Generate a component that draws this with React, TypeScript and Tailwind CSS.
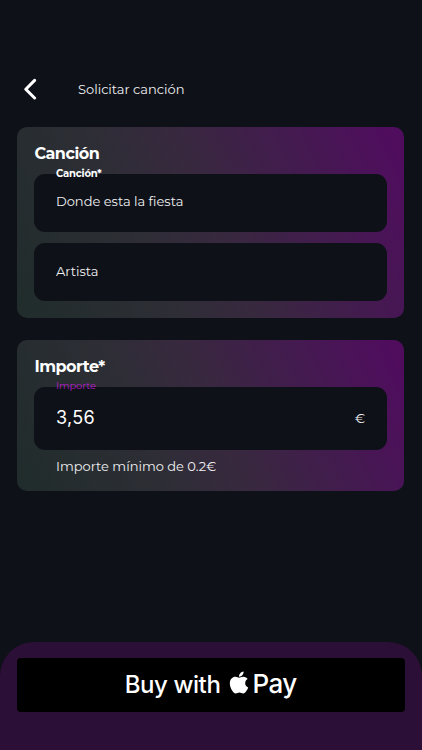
import { useState, type ReactNode } from "react";
import { FaApple } from "react-icons/fa";

type CardProps = {
  title: string;
  className: string;
  children: ReactNode;
}

const Card = ({ title, className, children }: CardProps) => (
  <section
    className={`mx-[17px] mr-[18px] rounded-[10px] bg-[linear-gradient(65deg,#202c2b_0%,#2d2e35_32%,#38283f_52%,#431b4f_74%,#500d5e_96%)] pr-[17.5px] pl-[17.4px] pt-[17.5px] ${className}`}
  >
    <h2 className="text-[16px] leading-[18px] font-bold tracking-[-0.48px] whitespace-nowrap text-white">{title}</h2>
    {children}
  </section>
);

export default function App() {
  const [song, setSong] = useState("Donde esta la fiesta");
  const [artist, setArtist] = useState("");
  const [amount, setAmount] = useState("3,56");

  return (
    <main className="flex h-[750px] w-full flex-col overflow-hidden bg-[#0e1118] font-['Montserrat','Inter',sans-serif] text-[#f0f0f2]">
      <header className="flex h-[22px] mt-[78px] items-center pl-[22px]">
        <button type="button" aria-label="Volver" className="w-[56px] text-white">
          <svg viewBox="0 0 16 22" className="h-[22px] w-4" fill="none" stroke="currentColor" strokeWidth="3" strokeLinecap="round" strokeLinejoin="round">
            <path d="M12.6 2.4 3.8 11.2l8.8 8.8" />
          </svg>
        </button>
        <h1 className="text-[13px] leading-[22px]">Solicitar canción</h1>
      </header>

      <Card title="Canción" className="mt-[27px] h-[191px]">
        <div className="relative mt-[11px] h-[58px] rounded-[11px] bg-[#0e1118]">
          <label htmlFor="song" className="absolute top-[-7px] left-[21.6px] text-[10px] leading-[14px] font-bold tracking-[-0.15px] text-white">
            Canción*
          </label>
          <input
            id="song"
            className="h-full w-full bg-transparent px-[21.6px] pb-[3px] text-[13px] outline-none"
            value={song}
            onChange={(e) => setSong(e.target.value)}
          />
        </div>
        <div className="mt-[11px] h-[58px] rounded-[11px] bg-[#0e1118]">
          <input
            aria-label="Artista"
            className="h-full w-full bg-transparent px-[21.6px] pb-px text-[13px] outline-none placeholder:text-[#f0f0f2]"
            placeholder="Artista"
            value={artist}
            onChange={(e) => setArtist(e.target.value)}
          />
        </div>
      </Card>

      <Card title="Importe*" className="mt-[22px] h-[151px]">
        <div className="relative mt-[11px] flex h-[63.5px] items-center rounded-[11px] bg-[#0e1118] pr-[21.5px]">
          <label htmlFor="amount" className="absolute top-[-7.5px] left-[21.6px] text-[10px] leading-[14px] tracking-[-0.1px] text-[#b81ccb]">
            Importe
          </label>
          <input
            id="amount"
            className="h-full min-w-0 flex-1 bg-transparent pb-[2px] pl-[21.6px] font-['Inter',sans-serif] text-[18px] tracking-[0.3px] text-white outline-none"
            value={amount}
            onChange={(e) => setAmount(e.target.value)}
          />
          <span className="text-[13px]">€</span>
        </div>
        <p className="mt-[7px] ml-[21.6px] text-[13px] leading-[18px]">Importe mínimo de 0.2€</p>
      </Card>

      <footer className="mt-auto h-[108.5px] rounded-t-[34px] bg-[#2c0f36] pt-4 pr-[17.5px] pl-[17px]">
        <button type="button" className="flex h-[54.5px] w-full items-center justify-center rounded-[4px] bg-black font-['Inter',sans-serif] text-white">
          <span className="text-[24px] font-[450] tracking-[-0.4px]">Buy with</span>
          <FaApple className="mt-[-4px] ml-[8.5px] h-[25px] w-[20px]" />
          <span className="mt-[-2px] ml-[3.5px] text-[26px] font-[450] tracking-[-0.5px]">Pay</span>
        </button>
      </footer>
    </main>
  );
}
